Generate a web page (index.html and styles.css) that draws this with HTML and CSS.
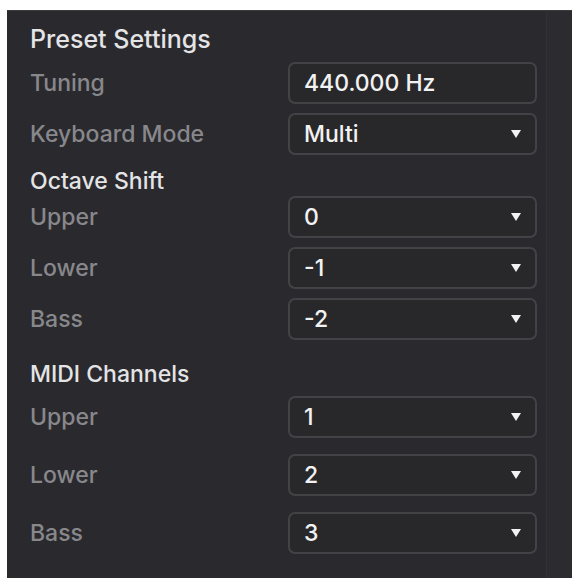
FILE: index.html
```html
<!DOCTYPE html>
<html lang="en">
  <head>
    <meta charset="UTF-8" />
    <title>Preset Settings</title>
    <link rel="stylesheet" href="styles.css">
  </head>
  <body>
    <div class="panel">
      <div class="panel-content">
        <div class="section-title first">Preset Settings</div>
        <div class="setting-row">
          <div class="setting-label">Tuning</div>
          <div class="setting-box">440.000 Hz</div>
        </div>
        <div class="setting-row">
          <div class="setting-label">Keyboard Mode</div>
          <div class="setting-box">Multi<span class="arrow"></span></div>
        </div>

        <div class="section-title octave">Octave Shift</div>
        <div class="setting-row">
          <div class="setting-label">Upper</div>
          <div class="setting-box">0<span class="arrow"></span></div>
        </div>
        <div class="setting-row">
          <div class="setting-label">Lower</div>
          <div class="setting-box">-1<span class="arrow"></span></div>
        </div>
        <div class="setting-row">
          <div class="setting-label">Bass</div>
          <div class="setting-box">-2<span class="arrow"></span></div>
        </div>

        <div class="section-title midi">MIDI Channels</div>
        <div class="midi-rows">
          <div class="setting-row">
            <div class="setting-label">Upper</div>
            <div class="setting-box">1<span class="arrow"></span></div>
          </div>
          <div class="setting-row">
            <div class="setting-label">Lower</div>
            <div class="setting-box">2<span class="arrow"></span></div>
          </div>
          <div class="setting-row">
            <div class="setting-label">Bass</div>
            <div class="setting-box">3<span class="arrow"></span></div>
          </div>
        </div>
      </div>
      <div class="panel-scroll"></div>
    </div>
  </body>
</html>
```

FILE: styles.css
```css
* {
  margin: 0px;
  padding: 0px;
  box-sizing: border-box;
}
body {
  background-color: #ffffff;
  font-family: Inter, "Noto Sans", sans-serif;
}
.panel {
  display: flex;
  margin: 10px 4px 3px 7px;
  height: 568px;
  background-color: #2a2a2e;
  border-top: 1px solid #3a3a3e;
}
.panel-content {
  flex: 1;
  padding: 13px 9px 0px 23px;
}
.panel-scroll {
  width: 26px;
  background-color: #2c2c30;
  border-left: 1px solid #313135;
}
.section-title {
  height: 30px;
  line-height: 30px;
  font-size: 23px;
  font-weight: 500;
  color: #e4e4e6;
}
.first {
  margin-bottom: 8px;
  font-size: 25px;
}
.octave {
  margin-top: 11px;
}
.midi {
  margin-top: 19px;
  margin-bottom: 7px;
}
.setting-row {
  display: grid;
  grid-template-columns: 258px 249px;
  align-items: center;
  margin-bottom: 9px;
}
.midi-rows .setting-row {
  margin-bottom: 16px;
}
.setting-label {
  font-size: 23px;
  font-weight: 500;
  color: #88888c;
}
.setting-box {
  display: flex;
  align-items: center;
  justify-content: space-between;
  height: 42px;
  padding: 0px 16px 0px 14px;
  border: 2px solid #434347;
  border-radius: 7px;
  background-color: #28282b;
  font-size: 23px;
  font-weight: 500;
  color: #f2f2f2;
}
.arrow {
  width: 0px;
  height: 0px;
  margin-right: -2px;
  border-left: 5px solid transparent;
  border-right: 5px solid transparent;
  border-top: 8px solid #f2f2f2;
}
```
